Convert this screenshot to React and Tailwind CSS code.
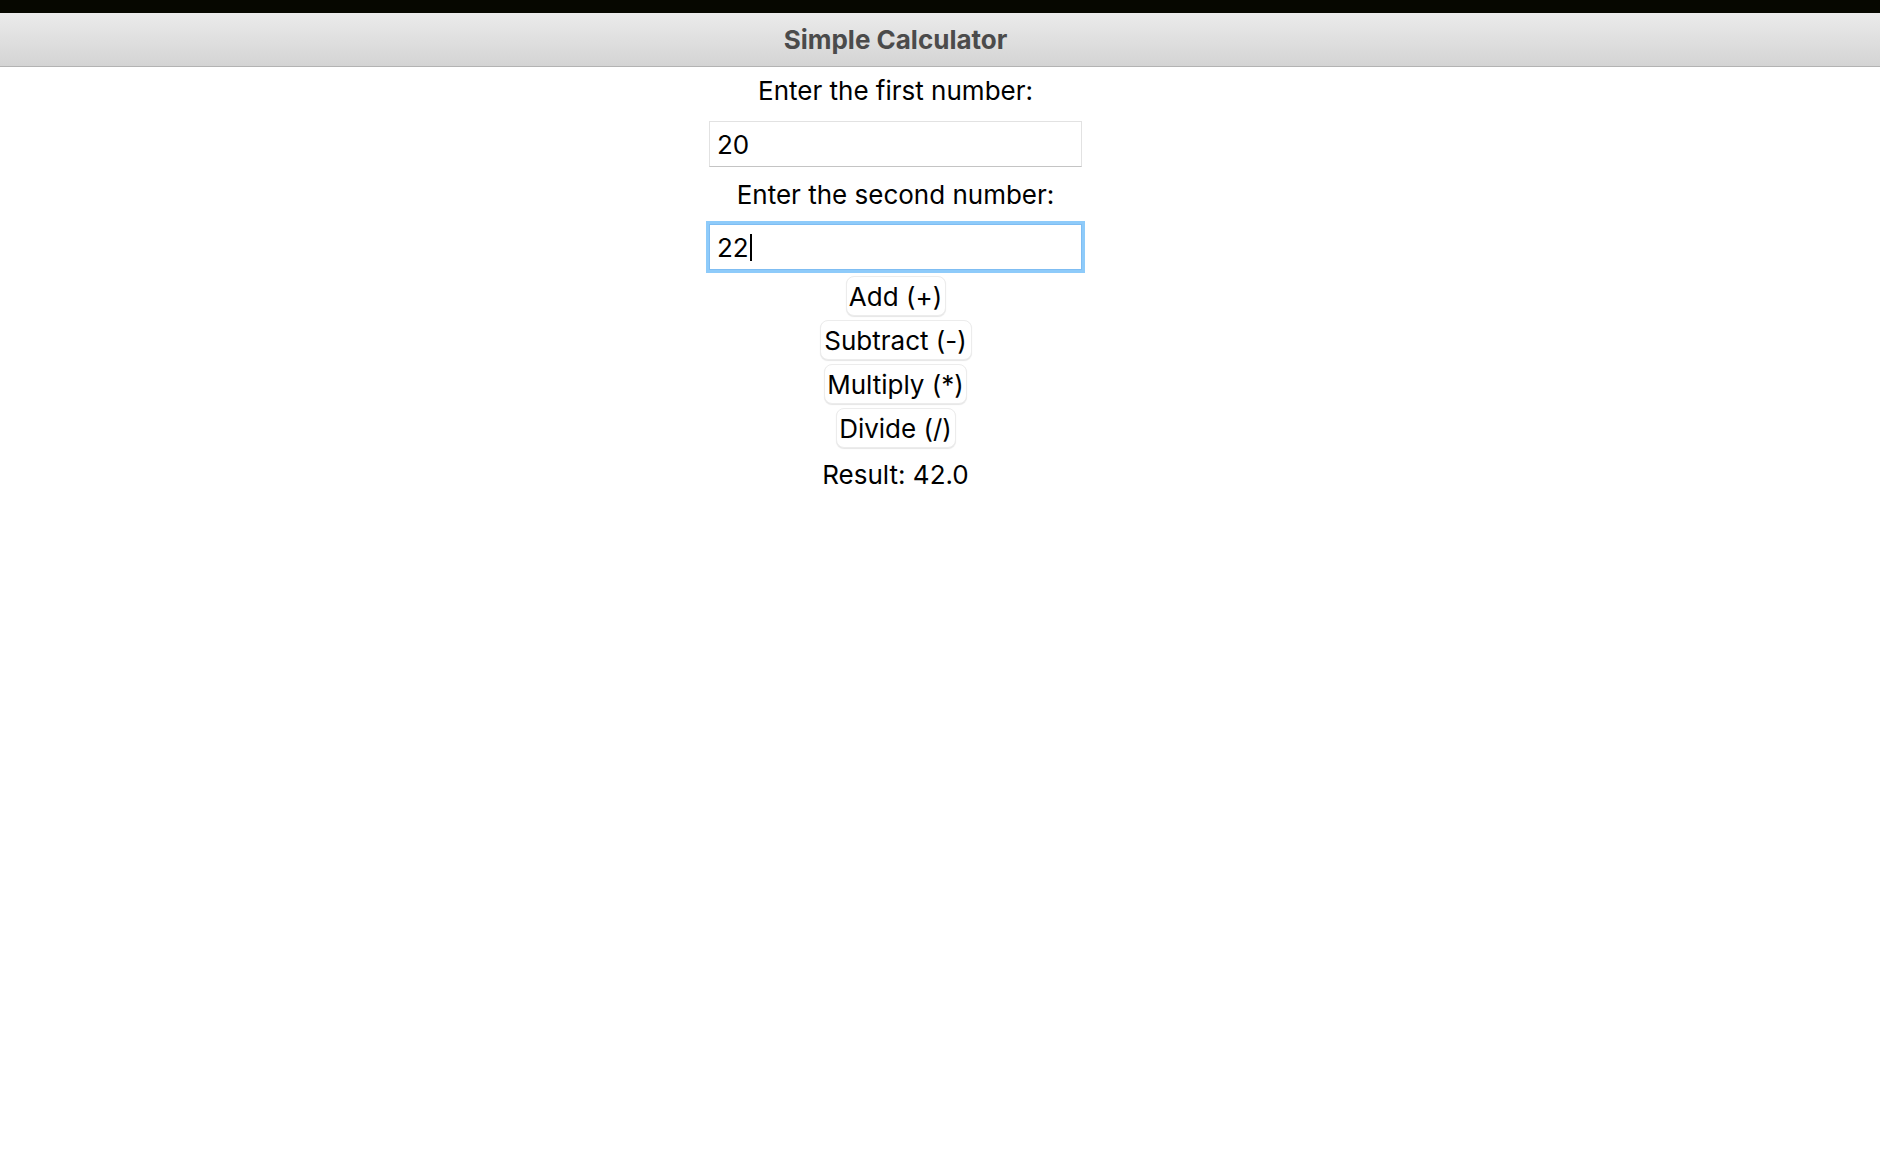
export default function App() {
  const font = { fontFamily: 'Inter, "Liberation Sans", sans-serif' };
  const buttons = ["Add (+)", "Subtract (-)", "Multiply (*)", "Divide (/)"];
  const widthClass = {
    "Add (+)": "w-[100px]",
    "Subtract (-)": "w-[152px]",
    "Multiply (*)": "w-[143px]",
    "Divide (/)": "w-[120px]",
  };
  return (
    <div className="min-h-[1175px] w-[1880px] bg-white" style={font}>
      <div className="h-[13px] bg-[#060700]" />
      <div className="h-[54px] border-b border-[#b3b3b3] bg-gradient-to-b from-[#ebebeb] to-[#d4d4d4]">
        <div className="flex h-full w-[1791px] items-center justify-center">
          <span className="text-[26px] font-bold leading-[31px] text-[#4b4b4b]">Simple Calculator</span>
        </div>
      </div>
      <div className="flex w-[1791px] flex-col items-center">
        <div className="mt-[8px] text-[26px] leading-[31px] text-black">Enter the first number:</div>
        <div className="mt-[15px] flex h-[46px] w-[373px] items-center border border-[#e2e2e2] border-b-[#c4c4c4] bg-white px-[7px] text-[26px] leading-[31px] text-black">
          20
        </div>
        <div className="mt-[12px] text-[26px] leading-[31px] text-black">Enter the second number:</div>
        <div className="mt-[14px] flex h-[46px] w-[373px] items-center border border-[#7fbdf2] bg-white px-[7px] text-[26px] leading-[31px] text-black shadow-[0_0_0_3px_#8ecbfa]">
          <span>22</span>
          <span className="ml-[1px] inline-block h-[27px] w-[2px] bg-black" />
        </div>
        <div className="mt-[6px] flex flex-col items-center gap-[4px]">
          {buttons.map((label) => (
            <button
              key={label}
              className={`${widthClass[label]} flex h-[40px] items-center justify-center rounded-[8px] border border-[#ececec] bg-white text-[26px] leading-[31px] text-black shadow-[0_1px_1px_rgba(0,0,0,0.10)]`}
            >
              {label}
            </button>
          ))}
        </div>
        <div className="mt-[11px] text-[26px] leading-[31px] text-black">Result: 42.0</div>
      </div>
    </div>
  );
}
